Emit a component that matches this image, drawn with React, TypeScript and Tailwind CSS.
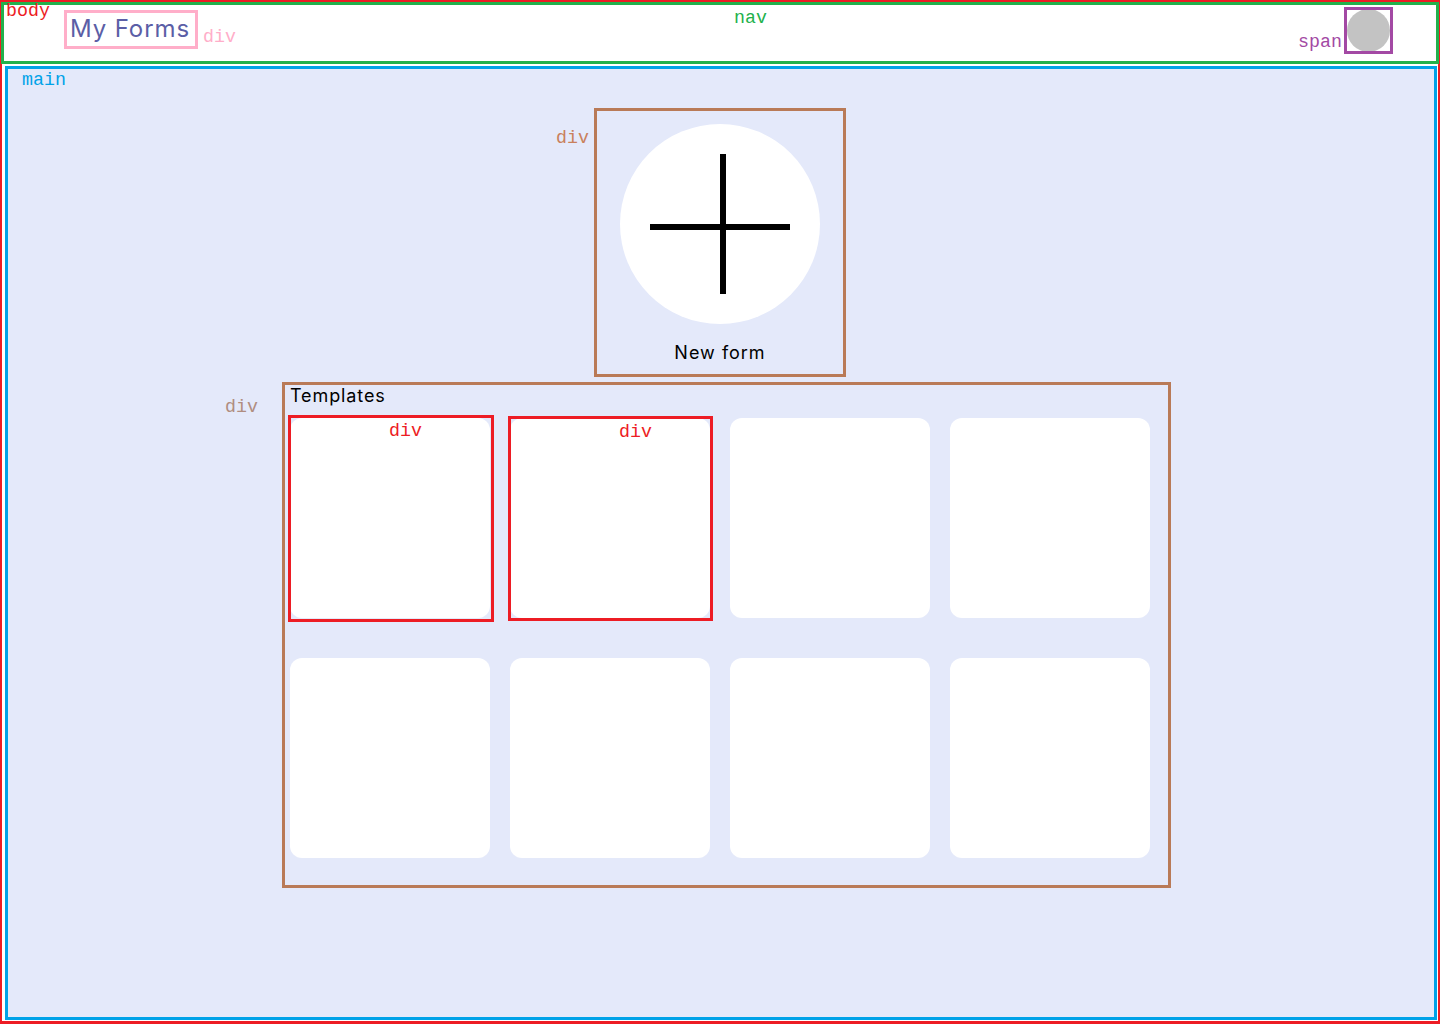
const labelClass = "absolute font-['Liberation_Mono',monospace] text-[18.3px] leading-[20px]";

function Tag({ text, className }: { text: string; className: string }) {
  return <span className={`${labelClass} ${className}`}>{text}</span>;
}

function TemplateCard() {
  return <div className="h-[200px] w-[200px] rounded-[12px] bg-white" />;
}

export default function App() {
  return (
    <div className="relative h-[1024px] w-[1440px] border-x-2 border-t-2 border-b-[3px] border-[#ed1c24] bg-white font-['Inter',sans-serif]">
      <Tag text="body" className="left-[4px] top-[-1px] z-10 text-[#ed1c24]" />

      <nav className="relative -mx-px flex h-[62px] items-start justify-between border-[3px] border-[#22b14c] bg-white">
        <div className="ml-[60px] mt-[5px] flex h-[39px] w-[134px] items-center border-[3px] border-[#ffaec9] pl-[3px]">
          <span className="-translate-y-px whitespace-nowrap text-[24px] tracking-[0.9px] text-[#5b5ea6]">My Forms</span>
        </div>
        <Tag text="div" className="left-[199px] top-[22px] text-[#ffaec9]" />
        <Tag text="nav" className="left-[730px] top-[3px] text-[#22b14c]" />
        <Tag text="span" className="left-[1294px] top-[27px] text-[#a349a4]" />
        <div className="mr-[43px] mt-[2px] flex h-[47px] w-[49px] items-center justify-center overflow-hidden border-[3px] border-[#a349a4]">
          <div className="h-[43px] w-[43px] shrink-0 rounded-full bg-[#c3c3c3]" />
        </div>
      </nav>

      <main className="relative ml-[3px] mr-px mt-[2px] flex h-[954px] flex-col items-center border-[3px] border-[#00a2e8] bg-[#e4e9fa] pr-[2px]">
        <Tag text="main" className="left-[14px] top-[1px] text-[#00a2e8]" />

        <div className="relative mt-[39px] flex h-[269px] w-[252px] flex-col items-center border-[3px] border-[#b97a57]">
          <Tag text="div" className="left-[-41px] top-[17px] text-[#c9805c]" />
          <div className="mt-[13px] h-[200px] w-[200px] shrink-0 rounded-full bg-white">
            <svg width="200" height="200" viewBox="0 0 200 200">
              <rect x="30" y="100" width="140" height="6" fill="#000" />
              <rect x="100" y="30" width="6" height="140" fill="#000" />
            </svg>
          </div>
          <span className="mt-[16px] whitespace-nowrap text-[18px] leading-[26px] tracking-[1px] text-black">New form</span>
        </div>

        <div className="relative ml-[274px] mt-[5px] h-[506px] w-[889px] self-start border-[3px] border-[#b97a57]">
          <Tag text="div" className="left-[-60px] top-[12px] text-[#b08d80]" />
          <p className="-translate-y-px pl-[5px] text-[18px] leading-[24px] tracking-[0.9px] text-black">Templates</p>
          <div className="ml-[5px] mt-[9px] grid w-[860px] grid-cols-4 gap-x-[20px] gap-y-[40px]">
            <div className="relative">
              <TemplateCard />
              <div className="absolute left-[-2px] top-[-3px] h-[207px] w-[206px] border-[3px] border-[#ed1c24]" />
              <Tag text="div" className="left-[99px] top-[3px] text-[#ed1c24]" />
            </div>
            <div className="relative">
              <TemplateCard />
              <div className="absolute left-[-2px] top-[-2px] h-[205px] w-[205px] border-[3px] border-[#ed1c24]" />
              <Tag text="div" className="left-[109px] top-[4px] text-[#ed1c24]" />
            </div>
            <TemplateCard />
            <TemplateCard />
            <TemplateCard />
            <TemplateCard />
            <TemplateCard />
            <TemplateCard />
          </div>
        </div>
      </main>
    </div>
  );
}
